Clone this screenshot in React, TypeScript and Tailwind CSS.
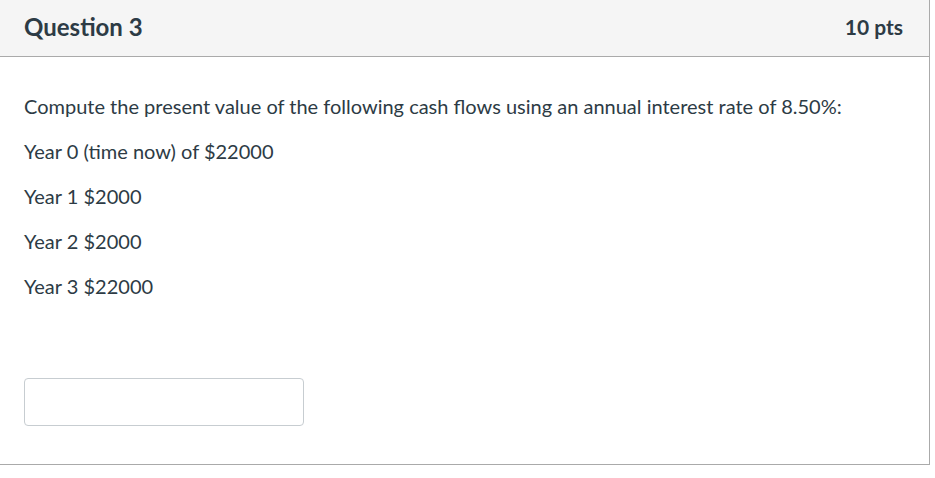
export default function App() {
  return (
    <div className="w-[935px] h-[478px] bg-white" style={{ fontFamily: "Lato, 'Open Sans', sans-serif" }}>
      <div className="w-[930px] h-[465px] border-r border-b border-[#aaaaaa] flex flex-col">
        <div className="h-[57px] bg-[#f5f5f5] border-b border-[#aaaaaa] flex items-center justify-between pl-[24px] pr-[26px] pb-[2px]">
          <span className="text-[24px] font-bold text-[#2d3b45]">Question 3</span>
          <span className="text-[21px] font-bold text-[#2d3b45]">10 pts</span>
        </div>
        <div className="flex flex-col gap-[15px] pl-[24px] pt-[34px] text-[20px] leading-[30px] text-[#2d3b45]">
          <p>Compute the present value of the following cash flows using an annual interest rate of 8.50%:</p>
          <p>Year 0 (time now) of $22000</p>
          <p>Year 1 $2000</p>
          <p>Year 2 $2000</p>
          <p>Year 3 $22000</p>
        </div>
        <div className="pl-[24px] pt-[77px]">
          <div className="w-[280px] h-[48px] border border-[#c7cdd1] rounded-[4px] bg-white" />
        </div>
      </div>
    </div>
  );
}
